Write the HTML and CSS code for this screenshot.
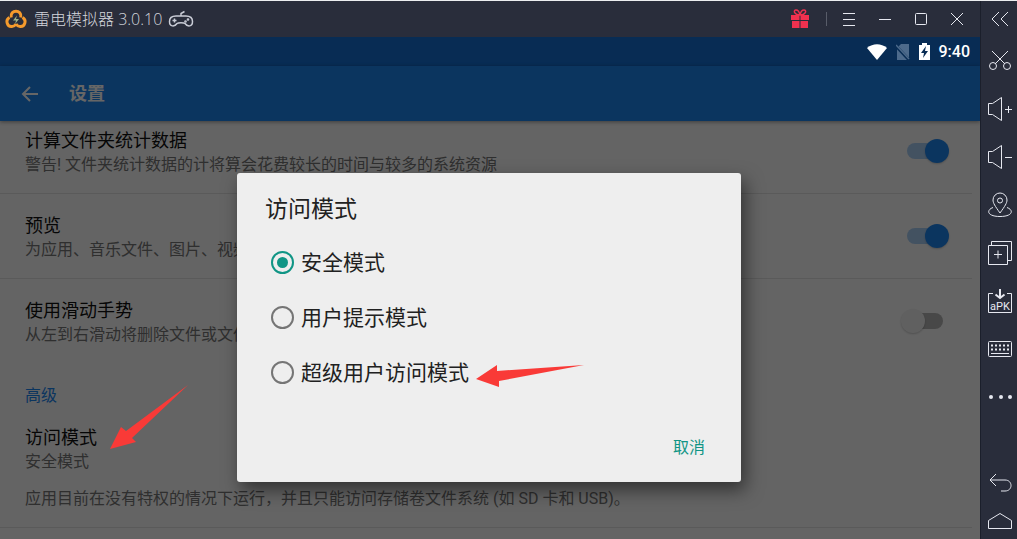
FILE: index.html
```html
<!DOCTYPE html>
<html lang="zh-CN">
<head>
    <meta charset="UTF-8">
    <meta name="viewport" content="width=device-width, initial-scale=1.0">
    <title>雷电模拟器</title>
    <link rel="stylesheet" href="styles.css">
</head>
<body>

<div class="emulator">
    <div class="main">
        <header class="titlebar">
            <svg class="logo" width="22" height="20" viewBox="0 0 22 20">
                <g fill="none" stroke="#f59a2c" stroke-width="3">
                    <path d="M6.200 8.500C4.500 0 17.500 0 15.800 8.500"/>
                    <path d="M4.500 8.500C0 11 2 18 7 17.500c1.500 0 3-1 4-2.500"/>
                    <path d="M17.500 8.500C22 11 20 18 15 17.500c-1.500 0-3-1-4-2.500"/>
                </g>
                <path d="M12 6.500l-4 5h3l-1 3.500 4-5h-3z" fill="#9fb58a"/>
            </svg>
            <span class="name">雷电模拟器 3.0.10</span>
            <svg class="pad" width="26" height="18" viewBox="0 0 26 18" fill="none" stroke="#c9ccd6" stroke-width="1.500">
                <path d="M8 6h10c4 0 6.500 2 6.500 5.500 0 5.500-5 5.500-7.500 2-1-1-7-1-8 0-2.500 3.500-7.500 3.500-7.500-2C1.500 8 4 6 8 6z"/>
                <path d="M13 6V3.500l3.500-2M6.500 8.500v4M4.500 10.500h4"/>
                <circle cx="20" cy="9.500" r=".6"/><circle cx="17.500" cy="11.500" r=".6"/>
            </svg>
            <div class="win-buttons">
                <button type="button" aria-label="礼包">
                    <svg width="18" height="20" viewBox="0 0 18 20" fill="#f0314f">
                        <path d="M0 6h8.500v5H0zM9.500 6H18v5H9.500zM1 12h7.500v7H1zM9.500 12H17v7H9.500z"/>
                        <path d="M9 6C3 6 2 1 5 1s4 5 4 5 1-5 4-5 2 5-4 5z" fill="none" stroke="#f0314f" stroke-width="1.500"/>
                    </svg>
                </button>
                <span class="sep"></span>
                <button type="button" aria-label="菜单"><svg width="14" height="14" viewBox="0 0 14 14"><path d="M1 1.500h12M1 7.500h12M1 13.500h12"/></svg></button>
                <button type="button" aria-label="最小化"><svg width="14" height="14" viewBox="0 0 14 14"><path d="M1 7.500h12"/></svg></button>
                <button type="button" aria-label="最大化"><svg width="14" height="14" viewBox="0 0 14 14"><rect x="1.500" y="1.500" width="11" height="11" rx="1"/></svg></button>
                <button type="button" aria-label="关闭"><svg width="14" height="14" viewBox="0 0 14 14"><path d="M1 1l12 12M13 1L1 13"/></svg></button>
            </div>
        </header>

        <div class="screen">
            <div class="statusbar">
                <div class="status-icons">
                    <svg width="20" height="16" viewBox="0 0 20 16"><path d="M0 4C6-1 14-1 20 4L10 16z" fill="#fff"/></svg>
                    <svg width="14" height="16" viewBox="0 0 14 16"><path d="M5 0h8v16H1V4z" fill="#4d6a8b"/><path d="M0 2l13 14" stroke="#082c54" stroke-width="3"/><path d="M0 1l13 14" stroke="#4d6a8b" stroke-width="1.500"/></svg>
                    <svg width="11" height="17" viewBox="0 0 11 17"><path d="M3 0h5v2h3v15H0V2h3z" fill="#fff"/><path d="M7 3L2 10h3l-1 5 5-7H6z" fill="#082c54"/></svg>
                    <span>9:40</span>
                </div>
            </div>
            <div class="appbar">
                <button type="button" aria-label="返回"><svg width="18" height="16" viewBox="0 0 18 16" fill="none" stroke="#fff" stroke-width="2"><path d="M17 8H2M9 1L2 8l7 7"/></svg></button>
                <h1>设置</h1>
            </div>

            <div class="settings">
                <div class="row first">
                    <div class="text">
                        <label for="stat">计算文件夹统计数据</label>
                        <p>警告! 文件夹统计数据的计将算会花费较长的时间与较多的系统资源</p>
                    </div>
                    <input type="checkbox" class="switch" id="stat" checked>
                </div>
                <div class="row">
                    <div class="text">
                        <label for="preview">预览</label>
                        <p>为应用、音乐文件、图片、视频</p>
                    </div>
                    <input type="checkbox" class="switch" id="preview" checked>
                </div>
                <div class="row last">
                    <div class="text">
                        <label for="swipe">使用滑动手势</label>
                        <p>从左到右滑动将删除文件或文件</p>
                    </div>
                    <input type="checkbox" class="switch" id="swipe">
                </div>
                <h2>高级</h2>
                <div class="access">
                    <h3>访问模式</h3>
                    <p>安全模式</p>
                    <p class="note">应用目前在没有特权的情况下运行，并且只能访问存储卷文件系统 (如 SD 卡和 USB)。</p>
                </div>
            </div>

            <div class="overlay">
                <form class="dialog" role="dialog" aria-labelledby="dialog-title">
                    <h2 id="dialog-title">访问模式</h2>
                    <label><input type="radio" name="mode" checked>安全模式</label>
                    <label><input type="radio" name="mode">用户提示模式</label>
                    <label><input type="radio" name="mode">超级用户访问模式</label>
                    <div class="actions"><button type="button">取消</button></div>
                </form>
            </div>
            <svg class="arrow arrow-root" width="108" height="24" viewBox="0 0 108 24"><path d="M0 14L21 0v6L108 0 23 16v6z"/></svg>
            <svg class="arrow arrow-mode" width="78" height="66" viewBox="0 0 78 66"><path d="M0 64L11 42l5 4L78 0 22 53l4 4z"/></svg>
        </div>
    </div>

    <nav class="sidebar">
        <button type="button" class="collapse" aria-label="收起"><svg width="20" height="14" viewBox="0 0 20 14"><path d="M9 0L2 7l7 7M18 0l-7 7 7 7"/></svg></button>
        <button type="button" aria-label="截图"><svg width="24" height="20" viewBox="0 0 24 20"><path d="M4 0l13 13M20 0L7 13"/><circle cx="5" cy="15" r="3.500"/><circle cx="19" cy="15" r="3.500"/></svg></button>
        <button type="button" aria-label="音量加"><svg width="26" height="24" viewBox="0 0 26 24"><path d="M1.500 6.500h4l9-6v23l-9-6h-4zM18 12.500h7M21.500 9v7"/></svg></button>
        <button type="button" aria-label="音量减"><svg width="26" height="24" viewBox="0 0 26 24"><path d="M1.500 6.500h4l9-6v23l-9-6h-4zM18 12.500h7"/></svg></button>
        <button type="button" aria-label="定位"><svg width="26" height="26" viewBox="0 0 26 26"><path d="M13 21C8 14 6 11 6 8a7 7 0 0 1 14 0c0 3-2 6-7 13z"/><circle cx="13" cy="8.500" r="2.500"/><path d="M6 15.500C-1 18 0 24.500 13 24.500s14-6.500 7-9"/></svg></button>
        <button type="button" aria-label="多开"><svg width="26" height="26" viewBox="0 0 26 26"><path d="M1.500 5.500h19v19h-19zM4.500 5V1.500h20v19H21M7 14.500h8M11 10.500v8"/></svg></button>
        <button type="button" aria-label="安装APK"><svg width="26" height="26" viewBox="0 0 26 26"><path d="M6 5.500H1.500v19h23v-19H20"/><path d="M13 1v8M8.500 6.500L13 10l4.500-3.500" stroke-width="2"/><text x="13" y="22" text-anchor="middle">aPK</text></svg></button>
        <button type="button" aria-label="键盘"><svg width="26" height="18" viewBox="0 0 26 18"><rect x="1.500" y="1.500" width="23" height="15" rx="1"/><path d="M4 5.500h18M4 9.500h18" stroke-width="2" stroke-dasharray="2 2"/><path d="M4 13.500h18"/></svg></button>
        <button type="button" aria-label="更多"><svg width="26" height="6" viewBox="0 0 26 6"><g fill="#e6e8f0" stroke="none"><circle cx="4" cy="3" r="2"/><circle cx="14" cy="3" r="2"/><circle cx="23" cy="3" r="2"/></g></svg></button>
        <button type="button" class="back" aria-label="返回"><svg width="24" height="20" viewBox="0 0 24 20"><path d="M8 1L2 7l6 6M2 7h15c8 0 8 11 0 11h-4"/></svg></button>
        <button type="button" class="home" aria-label="主页"><svg width="26" height="18" viewBox="0 0 26 18"><path d="M1.500 16.500v-8L13 1.500l11.500 7v8z"/></svg></button>
    </nav>
</div>

</body>
</html>
```
FILE: styles.css
```css
* {
    box-sizing: border-box;
}

body {
    margin: 0;
    font-family: Roboto, "Noto Sans CJK SC", sans-serif;
    background-color: #292d3b;
}

h1, h2, h3, p {
    margin: 0;
    font-weight: normal;
}

button {
    padding: 0;
    border: none;
    background: none;
    font-family: inherit;
    cursor: pointer;
}

svg {
    display: block;
    flex-shrink: 0;
}

.emulator {
    display: flex;
    height: 100vh;
    overflow: hidden;
    border-top: 1px solid #eceef0;
}

.main {
    flex: 1;
    min-width: 0;
    display: flex;
    flex-direction: column;
}

/* title bar */
.titlebar {
    display: flex;
    align-items: center;
    height: 36px;
    flex-shrink: 0;
    padding: 0 5px;
    color: #d3d5dc;
}

.titlebar .name {
    margin: 0 6px 0 7px;
    font-family: "Open Sans", "Noto Sans CJK SC", sans-serif;
    font-size: 16px;
    font-weight: 300;
    line-height: 24px;
}

.win-buttons {
    display: flex;
    align-items: center;
    margin-left: auto;
}

.win-buttons button {
    width: 36px;
    height: 36px;
    display: flex;
    align-items: center;
    justify-content: center;
    fill: none;
    stroke: #e6e8f0;
}

.win-buttons button:first-child {
    stroke: none;
}

.sep {
    width: 1px;
    height: 14px;
    margin: 0 4px 0 8px;
    background-color: #585c69;
}

/* android screen */
.screen {
    flex: 1;
    position: relative;
    overflow: hidden;
    background-color: #fafafa;
}

.statusbar {
    height: 29px;
    display: flex;
    justify-content: flex-end;
    padding-right: 10px;
    background-color: #146ed2;
}

.status-icons {
    position: relative;
    z-index: 2;
    display: flex;
    align-items: center;
    gap: 9px;
    color: #fff;
    font-size: 16px;
    font-weight: 500;
}

.appbar {
    height: 55px;
    display: flex;
    align-items: center;
    gap: 30px;
    padding-left: 21px;
    background-color: #1c85ee;
    box-shadow: 0 1px 4px rgba(0, 0, 0, 0.4);
    position: relative;
}

.appbar h1 {
    color: #fff;
    font-size: 18px;
    font-weight: bold;
    line-height: 24px;
}

.row {
    display: flex;
    align-items: center;
    margin-right: 8px;
    padding: 20px 23px 16px 25px;
    border-bottom: 1px solid #e2e2e2;
}

.row.first {
    padding-top: 8px;
}

.row.last {
    border-bottom: none;
}

.text {
    flex: 1;
}

.settings label,
.settings h3 {
    display: block;
    color: #111;
    font-size: 18px;
    line-height: 24px;
}

.settings p {
    color: #757575;
    font-size: 16px;
    line-height: 24px;
    white-space: nowrap;
}

.settings h2 {
    padding: 21px 25px 18px;
    color: #1c85ee;
    font-size: 16px;
    line-height: 24px;
}

.access {
    margin-right: 8px;
    padding: 0 25px 16px;
    border-bottom: 1px solid #e2e2e2;
}

.settings .note {
    margin-top: 13px;
}

.switch {
    appearance: none;
    position: relative;
    width: 48px;
    height: 24px;
    margin: 0 0 4px;
}

.switch::before {
    content: "";
    position: absolute;
    top: 4px;
    left: 6px;
    width: 36px;
    height: 16px;
    border-radius: 8px;
    background-color: #b4b4b4;
}

.switch::after {
    content: "";
    position: absolute;
    top: 0;
    left: 0;
    width: 24px;
    height: 24px;
    border-radius: 50%;
    background-color: #f1f1f1;
    box-shadow: 0 1px 2px rgba(0, 0, 0, 0.2);
}

.switch:checked::before {
    background-color: #a8cdf3;
}

.switch:checked::after {
    left: 24px;
    background-color: #1c85ee;
}

/* dialog */
.overlay {
    position: absolute;
    top: 0;
    right: 0;
    bottom: 0;
    left: 0;
    display: flex;
    justify-content: center;
    align-items: flex-start;
    padding: 136px 2px 0 0;
    background-color: rgba(0, 0, 0, 0.6);
}

.dialog {
    width: 504px;
    max-width: 90%;
    padding: 21px 28px 22px;
    border-radius: 3px;
    background-color: #eee;
    box-shadow: 4px 8px 18px rgba(0, 0, 0, 0.5);
    color: #212121;
}

.dialog h2 {
    margin-bottom: 9px;
    font-size: 23px;
    line-height: 32px;
}

.dialog label {
    display: flex;
    align-items: center;
    height: 55px;
    padding: 0 0 4px 6px;
    font-size: 21px;
}

.dialog input {
    appearance: none;
    display: grid;
    place-content: center;
    width: 23px;
    height: 23px;
    margin: 4px 7px 0 0;
    border: 2px solid #757575;
    border-radius: 50%;
}

.dialog input:checked {
    border-color: #109585;
}

.dialog input:checked::before {
    content: "";
    width: 11px;
    height: 11px;
    border-radius: 50%;
    background-color: #109585;
}

.actions {
    display: flex;
    justify-content: flex-end;
    margin-top: 36px;
    padding-right: 8px;
}

.actions button {
    color: #109585;
    font-size: 16px;
    line-height: 24px;
}

/* arrows over the screen */
.arrow {
    position: absolute;
    fill: #f93a37;
}

.arrow-root {
    top: 328px;
    left: 476px;
}

.arrow-mode {
    top: 348px;
    left: 110px;
}

/* side tools */
.sidebar {
    width: 37px;
    display: flex;
    flex-direction: column;
    padding-left: 2px;
    border-left: 1px solid #1b1f2b;
}

.sidebar button {
    height: 48px;
    display: flex;
    align-items: center;
    justify-content: center;
    flex-shrink: 0;
    fill: none;
    stroke: #e6e8f0;
}

.sidebar .collapse {
    height: 36px;
}

.sidebar text {
    fill: #e6e8f0;
    stroke: none;
    font-size: 11px;
}

.sidebar .back {
    height: 40px;
    margin-top: auto;
}

.sidebar .home {
    height: 36px;
}
```
